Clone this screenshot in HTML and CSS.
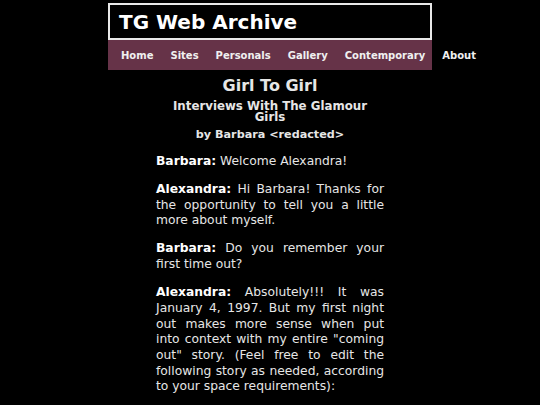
FILE: index.html
```html
<!DOCTYPE html>
<html>
<head>
<meta charset="utf-8">
<link rel="stylesheet" href="styles.css">
</head>
<body>
<div class="site">
  <div class="banner"><span class="site-title">TG Web Archive</span></div>
  <ul class="nav">
    <li>Home</li>
    <li>Sites</li>
    <li>Personals</li>
    <li>Gallery</li>
    <li>Contemporary</li>
    <li>About</li>
  </ul>
</div>
<div class="article">
  <h1 class="title">Girl To Girl</h1>
  <h2 class="subtitle">Interviews With The Glamour Girls</h2>
  <h3 class="byline">by Barbara &lt;redacted&gt;</h3>
  <p><b>Barbara:</b> Welcome Alexandra!</p>
  <p><b>Alexandra:</b> Hi Barbara! Thanks for the opportunity to tell you a little more about myself.</p>
  <p><b>Barbara:</b> Do you remember your first time out?</p>
  <p><b>Alexandra:</b> Absolutely!!! It was January 4, 1997. But my first night out makes more sense when put into context with my entire "coming out" story. (Feel free to edit the following story as needed, according to your space requirements):</p>
</div>
</body>
</html>
```
FILE: styles.css
```css
html, body {
  margin: 0;
  padding: 0;
  background: #000;
}
body {
  font-family: "DejaVu Sans", Verdana, sans-serif;
  color: #e6e6e6;
}
.site {
  width: 324px;
  margin: 3px auto 0;
}
.banner {
  box-sizing: border-box;
  height: 37px;
  border: 2px solid #e8e8e8;
  padding-left: 9px;
  display: flex;
  align-items: center;
}
.site-title {
  font-size: 20px;
  font-weight: bold;
  color: #fff;
}
.nav {
  list-style: none;
  margin: 0;
  padding: 0 0 0 13px;
  height: 30px;
  background: #663348;
  display: flex;
  align-items: center;
  gap: 17px;
  white-space: nowrap;
  font-size: 10px;
  font-weight: bold;
  color: #f0f0f0;
}
.article {
  width: 228px;
  margin: 0 auto;
  font-size: 12.3px;
  line-height: 15.7px;
}
.title {
  text-align: center;
  font-size: 16px;
  line-height: 20px;
  margin: 6px 0 5px;
}
.subtitle {
  text-align: center;
  font-size: 11.8px;
  line-height: 11px;
  margin: 0 0 5px;
}
.byline {
  text-align: center;
  font-size: 11.2px;
  line-height: 14px;
  margin: 0 0 12px;
}
.article p {
  margin: 0 0 12.3px;
  text-align: justify;
}
.article b {
  color: #fff;
}
```
